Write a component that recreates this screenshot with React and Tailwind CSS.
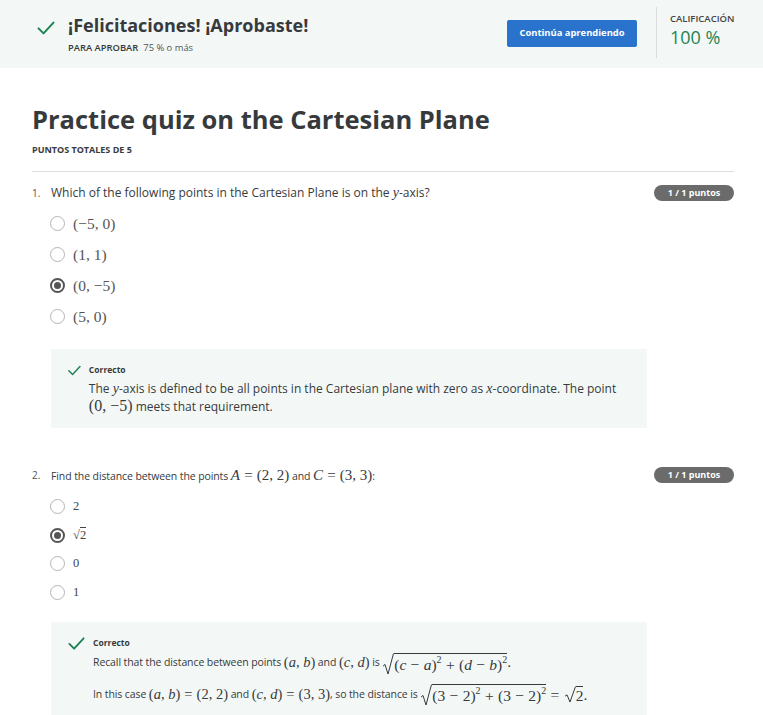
import React from "react";

const font = { fontFamily: '"Open Sans", sans-serif' };

function Check({ className }) {
  return (
    <svg viewBox="0 0 24 24" className={className} fill="none" stroke="#1f8354" strokeWidth="2.4" strokeLinecap="round" strokeLinejoin="round">
      <path d="M3 12.5l6 6L21 5.5" />
    </svg>
  );
}

const V = ({ children }) => <span className="italic">{children}</span>;
const Op = ({ children }) => <span className="px-[0.28em]">{children}</span>;
const M = ({ children, className = "" }) => (
  <span className={"font-['Liberation_Serif',serif] whitespace-nowrap tracking-normal " + className}>{children}</span>
);

function Sqrt({ children, h = 18 }) {
  return (
    <span className="inline-flex items-stretch align-middle">
      <svg width="12" height={h} viewBox={`0 0 12 ${h}`} className="shrink-0" fill="none" stroke="#373a3c" strokeWidth="1">
        <path d={`M1 ${h * 0.6} L3 ${h * 0.52} L6 ${h - 1} L11.5 0.5`} />
      </svg>
      <span className="border-t border-[#373a3c] pt-[1px] leading-none flex items-center">{children}</span>
    </span>
  );
}

function Radio({ checked }) {
  return checked ? (
    <span className="w-[15px] h-[15px] rounded-full border-2 border-[#555] flex items-center justify-center shrink-0">
      <span className="w-[7px] h-[7px] rounded-full bg-[#555]" />
    </span>
  ) : (
    <span className="w-[15px] h-[15px] rounded-full border border-[#b5b5b5] shrink-0" />
  );
}

function Badge() {
  return (
    <span className="bg-[#6b6b6b] text-white text-[9px] font-bold rounded-full h-[16px] w-[80px] flex items-center justify-center tracking-normal">
      1 / 1 puntos
    </span>
  );
}

export default function App() {
  return (
    <div className="w-[763px] h-[715px] bg-white text-[#373a3c] overflow-hidden" style={font}>
      <div className="h-[68px] bg-[#f3f8f6] flex items-start">
        <div className="flex pl-[36px] pt-[13px] flex-1">
          <Check className="w-[20px] h-[20px] mt-[5px]" />
          <div className="ml-[12px]">
            <div className="text-[18px] font-bold leading-[24px] text-[#373a3c]">¡Felicitaciones! ¡Aprobaste!</div>
            <div className="text-[9.4px] mt-[5px] leading-[12px]">
              <span className="font-semibold">PARA APROBAR</span>
              <span className="ml-[5px] text-[#555]">75 % o más</span>
            </div>
          </div>
        </div>
        <div className="mt-[20px] w-[130px] h-[27px] bg-[#2a73cc] rounded-[2px] text-white text-[9.4px] font-bold flex items-center justify-center">
          Continúa aprendiendo
        </div>
        <div className="ml-[19px] mt-[7px] w-px h-[51px] bg-[#dcdcdc]" />
        <div className="ml-[13px] pt-[13px] w-[93px]">
          <div className="text-[9.5px] font-semibold leading-[12px] text-[#444]">CALIFICACIÓN</div>
          <div className="text-[18px] leading-[22px] text-[#1f8354] mt-[1px]">100 %</div>
        </div>
      </div>

      <div className="pl-[32px] pr-[29px]">
        <h1 className="text-[25.5px] font-bold leading-[34px] mt-[34px] text-[#373a3c]">Practice quiz on the Cartesian Plane</h1>
        <div className="text-[9px] font-bold mt-[8px] leading-[12px]">PUNTOS TOTALES DE 5</div>
        <div className="h-px bg-[#dedede] mt-[15px]" />

        <div className="flex items-start mt-[13px]">
          <span className="text-[10px] w-[19px] text-[#555] leading-[16px]">1.</span>
          <span className="text-[12px] flex-1 leading-[16px]">
            Which of the following points in the Cartesian Plane is on the <M className="text-[14px]"><V>y</V></M>-axis?
          </span>
          <Badge />
        </div>

        <div className="ml-[18px] mt-[14px] flex flex-col gap-[14px]">
          {[["(−5, 0)", false], ["(1, 1)", false], ["(0, −5)", true], ["(5, 0)", false]].map(([t, c]) => (
            <div key={t} className="flex items-center h-[17px] gap-[8px]">
              <Radio checked={c} />
              <M className="text-[15.5px] text-[#555]">{t}</M>
            </div>
          ))}
        </div>

        <div className="ml-[19px] mr-[87px] mt-[24px] bg-[#f3f8f6] pl-[16px] pt-[12px] pb-[12px] flex">
          <Check className="w-[19px] h-[19px]" />
          <div className="ml-[7px]">
            <div className="text-[8.5px] font-bold leading-[16px] mt-[1px]">Correcto</div>
            <div className="text-[12px] leading-[18px] mt-[2px]">
              The <M className="text-[14px] leading-none"><V>y</V></M>-axis is defined to be all points in the Cartesian plane with zero as <M className="text-[14px] leading-none"><V>x</V></M>-coordinate. The point <M className="text-[16px] leading-none">(0, −5)</M> meets that requirement.
            </div>
          </div>
        </div>

        <div className="flex items-start mt-[39px]">
          <span className="text-[10px] w-[19px] text-[#555] leading-[16px]">2.</span>
          <span className="text-[10.5px] flex-1 leading-[16px] tracking-[-0.1px]">
            Find the distance between the points <M className="text-[15px]"><V>A</V><Op>=</Op>(2, 2)</M> and <M className="text-[15px]"><V>C</V><Op>=</Op>(3, 3)</M>:
          </span>
          <Badge />
        </div>

        <div className="ml-[18px] mt-[14px] flex flex-col gap-[11.5px]">
          {[["2", false], ["√2", true], ["0", false], ["1", false]].map(([t, c]) => (
            <div key={t} className="flex items-center h-[17px] gap-[8px]">
              <Radio checked={c} />
              <M className="text-[12.5px] text-[#444]">
                {t === "√2" ? (
                  <span>√<span className="border-t border-[#444]">2</span></span>
                ) : (
                  t
                )}
              </M>
            </div>
          ))}
        </div>

        <div className="ml-[19px] mr-[87px] mt-[21px] bg-[#f3f8f6] pl-[16px] pt-[12px] pb-[12px] flex">
          <Check className="w-[19px] h-[19px]" />
          <div className="ml-[7px] tracking-[-0.1px]">
            <div className="text-[8.5px] font-bold leading-[16px] mt-[1px] tracking-normal">Correcto</div>
            <div className="text-[10.5px] h-[22px] mt-[1px] flex items-center">
              <span className="whitespace-pre">Recall that the distance between points </span>
              <M className="text-[14.5px]">(<V>a</V>, <V>b</V>)</M>
              <span className="whitespace-pre"> and </span>
              <M className="text-[14.5px]">(<V>c</V>, <V>d</V>)</M>
              <span className="whitespace-pre"> is </span>
              <M className="text-[15.5px]">
                <Sqrt h={22}>
                  (<V>c</V><Op>−</Op><V>a</V>)<sup className="text-[10px]">2</sup><Op>+</Op>(<V>d</V><Op>−</Op><V>b</V>)<sup className="text-[10px]">2</sup>
                </Sqrt>
                .
              </M>
            </div>
            <div className="text-[10.5px] h-[22px] mt-[10px] flex items-center">
              <span className="whitespace-pre">In this case </span>
              <M className="text-[14.5px]">(<V>a</V>, <V>b</V>)<Op>=</Op>(2, 2)</M>
              <span className="whitespace-pre"> and </span>
              <M className="text-[14.5px]">(<V>c</V>, <V>d</V>)<Op>=</Op>(3, 3)</M>
              <span className="whitespace-pre">, so the distance is </span>
              <M className="text-[15.5px] inline-flex items-center">
                <Sqrt h={22}>
                  (3<Op>−</Op>2)<sup className="text-[10px]">2</sup><Op>+</Op>(3<Op>−</Op>2)<sup className="text-[10px]">2</sup>
                </Sqrt>
                <Op>=</Op>
                <Sqrt h={17}>2</Sqrt>.
              </M>
            </div>
          </div>
        </div>
      </div>
    </div>
  );
}
